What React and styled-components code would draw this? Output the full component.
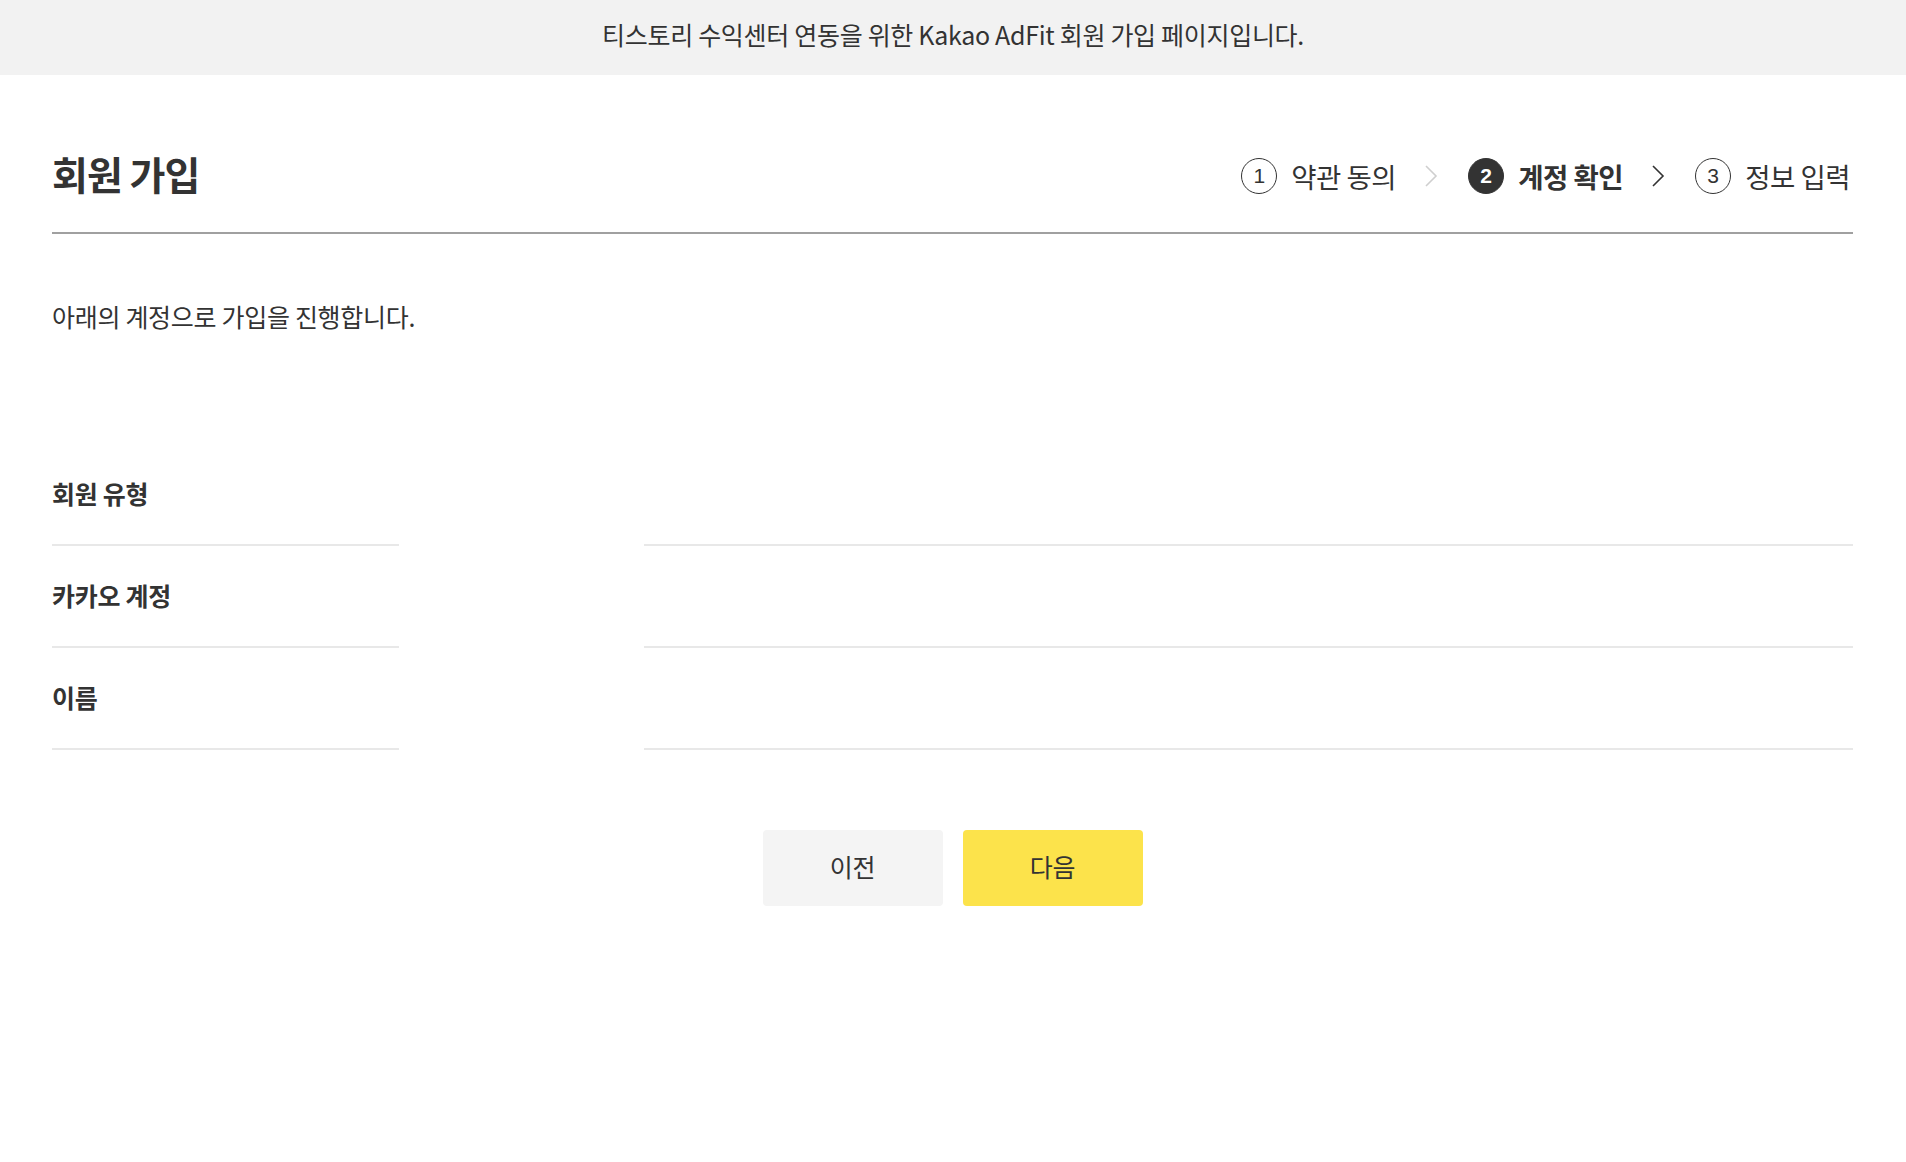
import React from "react";
import styled, { createGlobalStyle } from "styled-components";

const GlobalStyle = createGlobalStyle`
  html, body { margin: 0; padding: 0; background: #fff; }
  body {
    font-family: "Noto Sans CJK KR", "Noto Sans", sans-serif;
    color: #333;
  }
  * { box-sizing: border-box; }
`;

const Banner = styled.div`
  height: 75px;
  padding-bottom: 8px;
  background: #f2f2f2;
  display: flex;
  align-items: center;
  justify-content: center;
  font-size: 25px;
  letter-spacing: -0.3px;
  color: #333;
`;

const Main = styled.main`
  padding: 0 53px 0 52px;
`;

const Header = styled.header`
  display: flex;
  align-items: center;
  justify-content: space-between;
  height: 159px;
  padding-top: 39px;
  border-bottom: 2px solid #a0a0a0;
`;

const Title = styled.h1`
  margin: 0;
  font-size: 39px;
  font-weight: 700;
  letter-spacing: -1px;
  line-height: 1;
  color: #333;
`;

const Steps = styled.ol`
  display: flex;
  align-items: center;
  list-style: none;
  margin: 0 3px 0 0;
  padding: 5px 0 0;
`;

const Step = styled.li`
  display: flex;
  align-items: center;
  gap: 14px;
  font-size: 27.5px;
  letter-spacing: -0.5px;
  font-weight: ${(p) => (p.$active ? 700 : 400)};
  color: #333;
`;

const StepNum = styled.span`
  width: 36px;
  height: 36px;
  border-radius: 50%;
  border: 1.5px solid #333;
  background: ${(p) => (p.$active ? "#333" : "transparent")};
  color: ${(p) => (p.$active ? "#fff" : "#333")};
  display: flex;
  align-items: center;
  justify-content: center;
  font-family: "Liberation Sans", Arial, sans-serif;
  font-size: 21px;
  font-weight: ${(p) => (p.$active ? 700 : 400)};
  letter-spacing: 0;
`;

const Sep = styled.li`
  display: flex;
  align-items: center;
  margin: 0 30px 0 28px;
  color: ${(p) => (p.$light ? "#cfcfcf" : "#333")};
`;

const Desc = styled.p`
  margin: 66px 0 0;
  font-size: 25px;
  line-height: 33px;
  letter-spacing: -0.3px;
  color: #333;
`;

const Rows = styled.dl`
  display: grid;
  grid-template-columns: 347px 1fr;
  column-gap: 245px;
  margin: 111px 0 0;
`;

const Label = styled.dt`
  height: 102px;
  padding-bottom: 3px;
  display: flex;
  align-items: center;
  border-bottom: 2px solid #e8e8e8;
  font-size: 25px;
  font-weight: 700;
  letter-spacing: -0.3px;
  color: #333;
`;

const Value = styled.dd`
  margin: 0;
  height: 102px;
  border-bottom: 2px solid #e8e8e8;
`;

const Buttons = styled.div`
  display: flex;
  justify-content: center;
  gap: 20px;
  margin-top: 80px;
`;

const Button = styled.button`
  width: 180px;
  height: 76px;
  padding: 0 0 5px;
  border: 0;
  border-radius: 4px;
  background: ${(p) => (p.$primary ? "#fce34b" : "#f4f4f4")};
  color: #333;
  font-family: inherit;
  font-size: 25px;
  letter-spacing: -0.3px;
  cursor: pointer;
`;

const Chevron = () => (
  <svg width="14" height="24" viewBox="0 0 14 24" fill="none">
    <polyline
      points="2,2 12,12 2,22"
      stroke="currentColor"
      strokeWidth="1.6"
      fill="none"
    />
  </svg>
);

export default function App() {
  return (
    <>
      <GlobalStyle />
      <Banner>티스토리 수익센터 연동을 위한 Kakao AdFit 회원 가입 페이지입니다.</Banner>
      <Main>
        <Header>
          <Title>회원 가입</Title>
          <Steps>
            <Step>
              <StepNum>1</StepNum>약관 동의
            </Step>
            <Sep $light>
              <Chevron />
            </Sep>
            <Step $active>
              <StepNum $active>2</StepNum>계정 확인
            </Step>
            <Sep>
              <Chevron />
            </Sep>
            <Step>
              <StepNum>3</StepNum>정보 입력
            </Step>
          </Steps>
        </Header>
        <Desc>아래의 계정으로 가입을 진행합니다.</Desc>
        <Rows>
          <Label>회원 유형</Label>
          <Value />
          <Label>카카오 계정</Label>
          <Value />
          <Label>이름</Label>
          <Value />
        </Rows>
        <Buttons>
          <Button type="button">이전</Button>
          <Button type="button" $primary>
            다음
          </Button>
        </Buttons>
      </Main>
    </>
  );
}
